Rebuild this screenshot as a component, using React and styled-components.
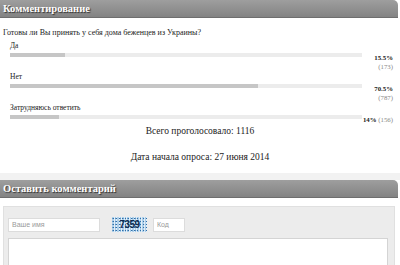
import React from 'react'
import styled, { createGlobalStyle } from 'styled-components'

const options = [
  { label: 'Да', percent: '15.5%', votes: 173, value: 15.5 },
  { label: 'Нет', percent: '70.5%', votes: 787, value: 70.5 },
  { label: 'Затрудняюсь ответить', percent: '14%', votes: 156, value: 14 },
]

export default function App() {
  return (
    <Page>
      <GlobalStyle />
      <SectionHeader>Комментирование</SectionHeader>
      <Question>Готовы ли Вы принять у себя дома беженцев из Украины?</Question>
      <PollList>
        {options.map((o) => (
          <PollOption key={o.label}>
            <OptionLabel>{o.label}</OptionLabel>
            <OptionRow>
              <BarTrack>
                <BarFill style={{ width: o.value + '%' }} />
              </BarTrack>
              <Stat>
                <b>{o.percent}</b> <Votes>({o.votes})</Votes>
              </Stat>
            </OptionRow>
          </PollOption>
        ))}
      </PollList>
      <Total>Всего проголосовало: 1116</Total>
      <DateLine>Дата начала опроса: 27 июня 2014</DateLine>
      <Band />
      <SectionHeader>Оставить комментарий</SectionHeader>
      <CommentForm>
        <FieldRow>
          <TextInput placeholder="Ваше имя" $width={92} />
          <Captcha>7359</Captcha>
          <TextInput placeholder="Код" $width={32} />
        </FieldRow>
        <MessageBox />
      </CommentForm>
    </Page>
  )
}

const GlobalStyle = createGlobalStyle`
  body {
    margin: 0;
    background: #fff;
    overflow: hidden;
  }
`

const Page = styled.div`
  width: 400px;
  height: 265px;
  overflow: hidden;
  font-family: "Liberation Serif", "DejaVu Serif", serif;
  color: #222;
`

const SectionHeader = styled.div`
  height: 18px;
  line-height: 18px;
  margin-right: 2px;
  padding-left: 3px;
  background: linear-gradient(#9e9e9e, #838383);
  border-bottom: 1px solid #6e6e6e;
  border-top-right-radius: 5px;
  color: #fff;
  font-weight: bold;
  font-size: 10.5px;
  text-shadow: 1px 1px 1px #333;
  box-sizing: border-box;
`

const Question = styled.div`
  margin-top: 9px;
  padding-left: 3px;
  font-size: 8px;
  line-height: 12px;
`

const PollList = styled.div`
  margin-top: 2px;
  padding: 0 7px 0 10px;
`

const PollOption = styled.div`
  margin-bottom: 1px;
`

const OptionLabel = styled.div`
  font-size: 7.5px;
  line-height: 10px;
`

const OptionRow = styled.div`
  display: flex;
  align-items: flex-start;
  margin-top: 2px;
`

const BarTrack = styled.div`
  flex: 1;
  height: 4px;
  background: #ececec;
`

const BarFill = styled.div`
  height: 100%;
  background: #c6c6c6;
`

const Stat = styled.div`
  width: 31px;
  text-align: right;
  font-size: 6.8px;
  line-height: 9px;
  min-height: 18px;
  b {
    color: #222;
  }
`

const Votes = styled.span`
  color: #888;
`

const Total = styled.div`
  margin-top: -8px;
  text-align: center;
  font-size: 9.5px;
  line-height: 11px;
`

const DateLine = styled.div`
  margin-top: 15px;
  text-align: center;
  font-size: 9.5px;
  line-height: 11px;
`

const Band = styled.div`
  height: 7px;
  margin-top: 10px;
  background: #f2f2f2;
`

const CommentForm = styled.div`
  margin: 8px 5px 0 3px;
  padding: 10px 6px 0 4px;
  background: #ececec;
  border: 1px solid #e0e0e0;
  height: 80px;
`

const FieldRow = styled.div`
  display: flex;
  align-items: center;
  gap: 6px;
`

const TextInput = styled.input`
  width: ${(p) => p.$width}px;
  height: 14px;
  box-sizing: border-box;
  border: 1px solid #dcdcdc;
  background: #fff;
  padding: 0 3px;
  font-family: "Liberation Sans", Arial, sans-serif;
  font-size: 7px;
  outline: none;
  &::placeholder {
    color: #9a9a9a;
  }
`

const Captcha = styled.span`
  margin-left: 6px;
  width: 35px;
  height: 15px;
  display: flex;
  align-items: center;
  justify-content: center;
  font-family: "Liberation Sans", Arial, sans-serif;
  font-size: 10px;
  font-weight: bold;
  color: #0d2a4d;
  letter-spacing: -0.5px;
  background-color: #a6cbe8;
  background-image: radial-gradient(#2f6fa8 0.7px, transparent 1px),
    radial-gradient(#ffffff 0.7px, transparent 1px),
    radial-gradient(#5b93c4 0.6px, transparent 0.9px);
  background-size: 3px 3px, 2.5px 2px, 4px 3px;
  background-position: 0 0, 1px 1px, 2px 0;
`

const MessageBox = styled.textarea`
  display: block;
  margin-top: 6px;
  width: 100%;
  height: 60px;
  box-sizing: border-box;
  border: 1px solid #d4d4d4;
  background: #fff;
  resize: none;
  outline: none;
`
